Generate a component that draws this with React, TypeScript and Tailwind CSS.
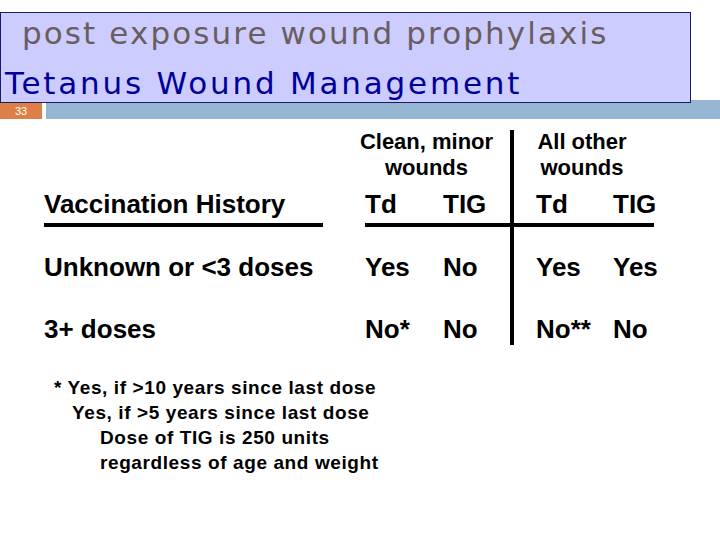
const sans = "font-['Liberation_Sans',Arial,sans-serif]";

const rows = [
  { label: 'Unknown or <3 doses', cells: ['Yes', 'No', 'Yes', 'Yes'], pad: 'pt-[25px]' },
  { label: '3+ doses', cells: ['No*', 'No', 'No**', 'No'], pad: 'pt-[32px] pb-[1px]' },
];

const notes = [
  { text: '* Yes, if >10 years since last dose', indent: 'pl-[54px]' },
  { text: 'Yes, if >5 years since last dose', indent: 'pl-[72px]' },
  { text: 'Dose of TIG is 250 units', indent: 'pl-[100px]' },
  { text: 'regardless of age and weight', indent: 'pl-[100px]' },
];

function Header() {
  return (
    <div className="pt-[12px]">
      <div className="relative z-10 h-[91px] w-[691px] overflow-hidden border border-[#1a1a66] bg-[#ccccff] font-['DejaVu_Sans',sans-serif]">
        <p className="pl-[21px] text-[31px] leading-[40px] tracking-[2.1px] text-[#6b5d5d]">post exposure wound prophylaxis</p>
        <p className="mt-[10px] pl-[4px] text-[31px] leading-[40px] tracking-[2.8px] text-[#000099]">Tetanus Wound Management</p>
      </div>
      <div className="-mt-[3px] flex h-[19px] gap-[4px]">
        <div className={`flex w-[42px] items-end justify-center bg-[#dd8047] pb-[2px] text-[11px] leading-none text-white ${sans}`}>33</div>
        <div className="flex-1 bg-[#94b6d2]" />
      </div>
    </div>
  );
}

function Table() {
  const cell = 'text-[26px] leading-[30px]';
  return (
    <div className={`ml-[44px] mt-[11px] grid grid-cols-[321px_78px_67px_26px_77px_41px] font-bold text-black ${sans}`}>
      <div />
      <div className="col-span-2 flex flex-col items-center whitespace-nowrap pr-[22px] text-[22px] leading-[24px]">
        <p>Clean, minor</p>
        <p className="mt-[2px]">wounds</p>
      </div>
      <div className="col-span-3 flex flex-col items-center whitespace-nowrap border-l-4 border-black pr-[4px] text-[22px] leading-[24px]">
        <p>All other</p>
        <p className="mt-[2px]">wounds</p>
      </div>

      <div className={`pt-[9px] ${cell}`}>
        <div className="w-[279px] border-b-4 border-black pb-[4px]">Vaccination History</div>
      </div>
      <div className={`border-b-4 border-black pb-[4px] pt-[9px] ${cell}`}>Td</div>
      <div className={`border-b-4 border-black pb-[4px] pt-[9px] ${cell}`}>TIG</div>
      <div className="border-b-4 border-l-4 border-black" />
      <div className={`border-b-4 border-black pb-[4px] pt-[9px] ${cell}`}>Td</div>
      <div className={`whitespace-nowrap border-b-4 border-black pb-[4px] pt-[9px] ${cell}`}>TIG</div>

      {rows.map((r) => (
        <>
          <div key={r.label} className={`${r.pad} ${cell}`}>{r.label}</div>
          <div className={`${r.pad} ${cell}`}>{r.cells[0]}</div>
          <div className={`${r.pad} ${cell}`}>{r.cells[1]}</div>
          <div className="border-l-4 border-black" />
          <div className={`${r.pad} ${cell}`}>{r.cells[2]}</div>
          <div className={`whitespace-nowrap ${r.pad} ${cell}`}>{r.cells[3]}</div>
        </>
      ))}
    </div>
  );
}

export default function App() {
  return (
    <div className="h-[540px] w-[720px] overflow-hidden bg-white">
      <Header />
      <Table />
      <div className={`mt-[30px] font-bold text-black ${sans}`}>
        {notes.map((n) => (
          <p key={n.text} className={`${n.indent} text-[19px] leading-[25px] tracking-[0.6px]`}>{n.text}</p>
        ))}
      </div>
    </div>
  );
}
